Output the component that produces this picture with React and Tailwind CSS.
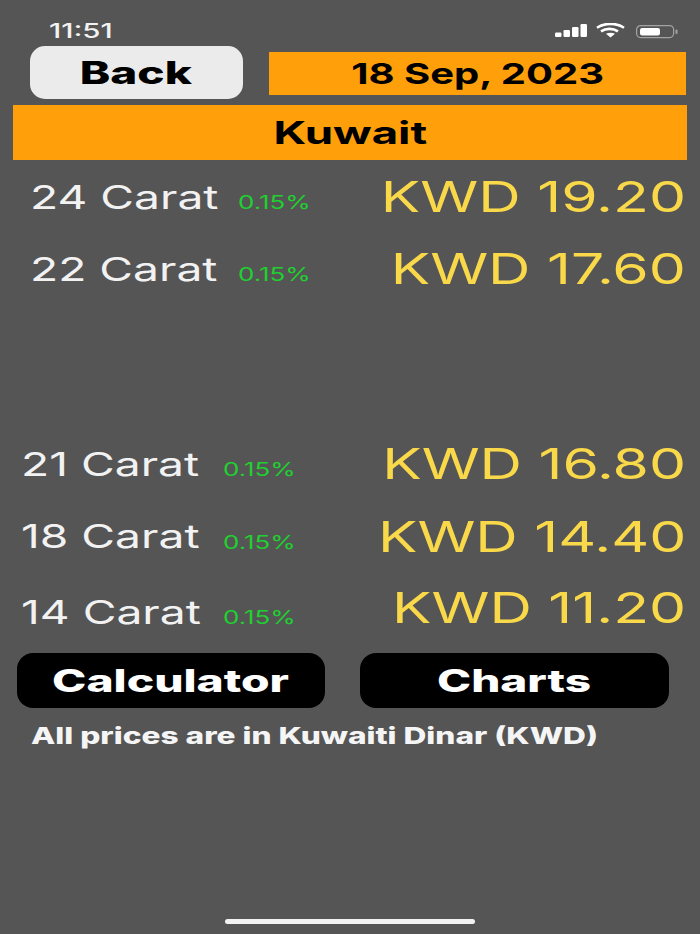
const firstRows = [
  { carat: "24 Carat", price: "KWD 19.20" },
  { carat: "22 Carat", price: "KWD 17.60" },
];

const secondRows = [
  { carat: "21 Carat", price: "KWD 16.80", rowClass: "h-[72px]" },
  { carat: "18 Carat", price: "KWD 14.40", rowClass: "h-[73px]" },
  { carat: "14 Carat", price: "KWD 11.20", rowClass: "h-[78px]", priceClass: "-mt-2" },
];

function StatusIcons() {
  return (
    <svg width="125" height="16" viewBox="0 0 125 16" fill="none">
      <rect x="0" y="9.5" width="6.5" height="4.5" rx="1.2" fill="#fff" />
      <rect x="8.5" y="7" width="6.5" height="7" rx="1.2" fill="#fff" />
      <rect x="17" y="4" width="6.5" height="10" rx="1.2" fill="#fff" />
      <rect x="25.5" y="1" width="6.5" height="13" rx="1.2" fill="#fff" />
      <path d="M42 4.8C49.5 -0.4 61.5 -0.4 69 4.8" stroke="#fff" strokeWidth="2.6" />
      <path d="M46 8.4C51 5 58 5 63 8.4" stroke="#fff" strokeWidth="2.6" />
      <path d="M55.5 14.5L51 10.8C53.6 9.4 57.4 9.4 60 10.8Z" fill="#fff" />
      <rect x="81.6" y="2.6" width="37" height="12" rx="4" stroke="#a3a3a3" strokeWidth="1.2" />
      <rect x="85" y="5" width="20" height="7.5" rx="2.2" fill="#fff" />
      <rect x="120.5" y="6.5" width="2" height="4.5" rx="1" fill="#a3a3a3" />
    </svg>
  );
}

function PriceRow({ carat, price, rowClass, labelClass, pctClass, priceClass = "" }) {
  return (
    <div className={`flex items-center ${rowClass}`}>
      <div className={`${labelClass} shrink-0 text-[33px] leading-none text-[#f2f2f2]`}>
        <span className="inline-block origin-left scale-x-[1.4] whitespace-nowrap">{carat}</span>
      </div>
      <div className={`${pctClass} mt-3 shrink-0 text-[18px] leading-none text-[#20d030]`}>
        <span className="inline-block origin-left scale-x-[1.44]">0.15%</span>
      </div>
      <div className={`${priceClass} ml-auto pr-[14px] text-[42px] leading-none text-[#f9d84a]`}>
        <span className="inline-block origin-right scale-x-[1.4] whitespace-nowrap">{price}</span>
      </div>
    </div>
  );
}

export default function App() {
  return (
    <div className="flex h-[934px] w-[700px] flex-col overflow-hidden bg-[#555555] font-['Inter','Liberation_Sans',sans-serif]">
      <div className="flex h-[46px] items-center justify-between pl-[49px] pr-[20px] pt-[16px]">
        <span className="inline-block origin-left scale-x-[1.47] text-[20px] font-medium leading-none text-[#f2f2f2]">11:51</span>
        <StatusIcons />
      </div>

      <div className="flex h-[59px] items-start pl-[30px] pr-[14px]">
        <button type="button" className="flex h-[53px] w-[213px] items-center justify-center rounded-[15px] bg-[#ebebeb] text-[31px] font-extrabold leading-none text-black">
          <span className="inline-block -translate-x-[1px] scale-x-[1.48]">Back</span>
        </button>
        <div className="ml-[26px] mt-[6px] flex h-[43px] flex-1 items-center justify-center bg-[#ff9f0a] text-[29px] font-bold leading-none text-black">
          <span className="inline-block scale-x-[1.38]">18 Sep, 2023</span>
        </div>
      </div>

      <div className="mx-[13px] flex h-[55px] items-center justify-center bg-[#ff9f0a] text-[31px] font-bold leading-none text-black">
        <span className="inline-block scale-x-[1.47]">Kuwait</span>
      </div>

      <div className="mt-[1px] flex flex-col pl-[30px]">
        {firstRows.map((row) => (
          <PriceRow key={row.carat} {...row} rowClass="h-[72px]" labelClass="w-[208px]" pctClass="w-[100px]" />
        ))}
      </div>

      <div className="mt-[123px] flex flex-col pl-[21px]">
        {secondRows.map((row) => (
          <PriceRow key={row.carat} {...row} labelClass="w-[202px]" pctClass="w-[100px]" />
        ))}
      </div>

      <div className="mt-[2px] flex pl-[17px]">
        <button type="button" className="flex h-[55px] w-[308px] items-center justify-center rounded-[16px] bg-black text-[31px] font-extrabold leading-none text-white">
          <span className="inline-block -translate-x-[1px] scale-x-[1.49]">Calculator</span>
        </button>
        <button type="button" className="ml-[35px] flex h-[55px] w-[309px] items-center justify-center rounded-[16px] bg-black text-[31px] font-extrabold leading-none text-white">
          <span className="inline-block scale-x-[1.48]">Charts</span>
        </button>
      </div>

      <p className="mt-[15px] pl-[31px] text-[23px] font-extrabold leading-[26px] text-[#f5f5f5]">
        <span className="inline-block origin-left scale-x-[1.375] whitespace-nowrap">All prices are in Kuwaiti Dinar (KWD)</span>
      </p>

      <div className="mt-auto mb-[10px] h-[5px] w-[250px] self-center rounded-full bg-[#f2f2f2]" />
    </div>
  );
}
